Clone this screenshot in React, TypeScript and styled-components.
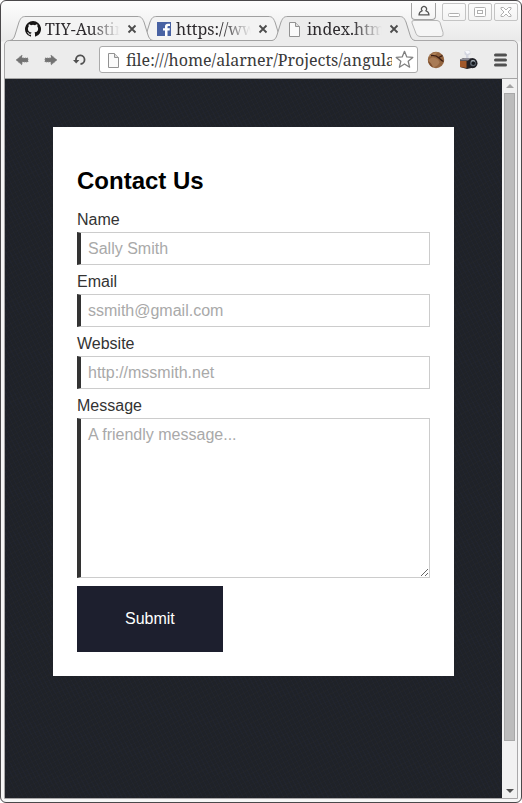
import React from "react";
import styled, { createGlobalStyle, css } from "styled-components";

const GlobalStyle = createGlobalStyle`
  *, *::before, *::after { box-sizing: border-box; }
  body { margin: 0; background: #fff; font-family: "Liberation Sans", Arial, sans-serif; }
  button { margin: 0; padding: 0; border: 0; background: none; font: inherit; color: inherit; }
  svg { display: block; }
`;

const uiSerif = css`
  font-family: "Droid Serif", "Noto Serif", "DejaVu Serif Condensed", "Liberation Serif", serif;
`;

const WindowFrame = styled.div`
  position: relative;
  display: flex;
  flex-direction: column;
  height: 100vh;
  min-height: 720px;
  padding: 1px 3px 3px;
  border: 1px solid #4a484a;
  border-radius: 6px;
  background: linear-gradient(#fdfdfd, #e9e9e9 40px, #f6f6f6 41px);
`;

const TabStrip = styled.div`
  display: flex;
  flex: none;
  height: 38px;
  align-items: flex-end;
  padding-left: 6px;
`;

const TabItem = styled.div<{ $order: number }>`
  position: relative;
  z-index: ${(p) => p.$order};
  display: flex;
  flex: 0 0 143px;
  min-width: 0;
  align-items: center;
  height: 25px;
  margin: 0 -12px -1px 0;
  padding: 0 16px 0 15px;
`;

const TabShape = styled.svg`
  position: absolute;
  inset: 0;
  z-index: -1;
  width: 143px;
  height: 25px;
`;

const TabTitle = styled.button`
  ${uiSerif}
  display: flex;
  flex: 1;
  min-width: 0;
  align-items: center;
  gap: 4px;
  color: #2d2a2d;
  font-size: 16px;
  line-height: 22px;
  text-align: left;
  white-space: nowrap;
`;

const FadingText = styled.span`
  flex: 1;
  overflow: hidden;
  mask-image: linear-gradient(to right, #000 60%, transparent);
`;

const CloseButton = styled.button`
  margin-left: 7px;
`;

const NewTabButton = styled.button`
  margin: 0 0 3px 8px;
`;

const WindowControls = styled.div`
  position: absolute;
  top: 2px;
  right: 3px;
  display: flex;
  gap: 2px;
  align-items: flex-start;
`;

const ControlButton = styled.button`
  display: grid;
  place-items: center;
  width: 24px;
  height: 18px;
  border: 1px solid #c4c4c4;
  border-radius: 2px;
`;

const ProfileButton = styled(ControlButton)`
  width: 25px;
  height: 17px;
  margin-right: 4px;
  border-color: #a3a3a3;
  border-top: 0;
  border-radius: 0 0 4px 4px;
`;

const Client = styled.div`
  display: flex;
  flex: 1;
  flex-direction: column;
  min-height: 0;
  border: 1px solid #a9a8a9;
  border-radius: 5px 5px 0 0;
  background: #ececec;
`;

const Toolbar = styled.div`
  display: flex;
  flex: none;
  align-items: center;
  height: 38px;
  padding: 0 9px;
  border-bottom: 1px solid #a4a4a4;
`;

const NavButtons = styled.div`
  display: flex;
  gap: 13px;
  margin-right: 11px;
`;

const AddressBar = styled.div`
  display: flex;
  flex: 1;
  min-width: 0;
  align-items: center;
  height: 27px;
  padding: 0 3px 0 6px;
  border: 1px solid #aaa;
  border-radius: 3px;
  background: #fff;
`;

const AddressInput = styled.input`
  ${uiSerif}
  flex: 1;
  width: 0;
  min-width: 0;
  margin: 0 3px 0 4px;
  padding: 0;
  border: 0;
  outline: 0;
  background: none;
  color: #3a3a3a;
  font-size: 16px;
  line-height: 22px;
`;

const ExtensionButtons = styled.div`
  display: flex;
  align-items: center;
  gap: 15px;
  margin-left: 9px;
`;

const Viewport = styled.div`
  display: flex;
  flex: 1;
  min-height: 0;
`;

const Page = styled.main`
  flex: 1;
  min-width: 0;
  overflow: hidden;
  padding: 48px;
  background:
    repeating-linear-gradient(63deg, rgba(35, 40, 58, 0.3) 0 1px, transparent 1px 4px),
    repeating-linear-gradient(-27deg, rgba(40, 40, 40, 0.3) 0 1px, transparent 1px 5px),
    #1f2228;
`;

const ContactForm = styled.form`
  display: flex;
  flex-direction: column;
  align-items: stretch;
  padding: 40px 24px 24px;
  background: #fff;
`;

const Heading = styled.h2`
  margin: 0 0 16px;
  color: #000;
  font-size: 24px;
  line-height: 28px;
`;

const Field = styled.div`
  display: flex;
  flex-direction: column;
  gap: 3px;
  margin-bottom: 8px;
`;

const Label = styled.label`
  color: #333;
  font-size: 16px;
  line-height: 18px;
`;

const control = css`
  display: block;
  width: 100%;
  margin: 0;
  padding: 7px;
  border: 1px solid #ccc;
  border-left: 4px solid #333;
  border-radius: 0;
  outline: 0;
  background: #fff;
  color: #333;
  font: 16px "Liberation Sans", Arial, sans-serif;
  &::placeholder { color: #a9a9a9; opacity: 1; }
`;

const TextInput = styled.input`
  ${control}
  height: 33px;
`;

const MessageArea = styled.textarea`
  ${control}
  height: 160px;
  resize: both;
`;

const SubmitButton = styled.button`
  align-self: flex-start;
  padding: 24px 48px;
  background: #1d1f2e;
  color: #fff;
  font-size: 16px;
  line-height: 18px;
`;

const Scrollbar = styled.div`
  display: flex;
  flex: none;
  flex-direction: column;
  align-items: center;
  width: 15px;
  background: #f1f1f1;
`;

const ScrollArrow = styled.button`
  display: grid;
  flex: none;
  place-items: center;
  width: 15px;
  height: 14px;
`;

const ScrollTrack = styled.div`
  flex: 1;
  padding-bottom: 43px;
`;

const ScrollThumb = styled.div`
  width: 11px;
  height: 100%;
  border: 1px solid #a8a8a8;
  background: #bcbcbc;
`;

const GitHubIcon = () => (
  <svg width="16" height="16" viewBox="0 0 16 16" fill="#171515">
    <path d="M8 0a8 8 0 0 0-2.53 15.59c.4.07.55-.17.55-.38v-1.49c-2.23.48-2.7-.94-2.7-.94-.36-.93-.89-1.17-.89-1.17-.73-.5.05-.49.05-.49.81.06 1.23.83 1.23.83.72 1.23 1.88.87 2.34.67.07-.52.28-.88.5-1.08-1.77-.2-3.64-.89-3.64-3.95 0-.87.31-1.59.82-2.15-.08-.2-.36-1.01.08-2.12 0 0 .67-.21 2.2.82a7.6 7.6 0 0 1 4 0c1.53-1.04 2.2-.82 2.2-.82.44 1.11.16 1.92.08 2.12.51.56.82 1.28.82 2.15 0 3.07-1.87 3.75-3.65 3.95.29.25.54.73.54 1.48v2.2c0 .21.15.46.55.38A8 8 0 0 0 8 0Z" />
  </svg>
);

const FacebookIcon = () => (
  <svg width="16" height="16" viewBox="0 0 16 16">
    <rect x="1" y="1" width="14" height="14" fill="#4862a3" />
    <path fill="#fff" d="M9 15V9.5H7V7.2h2V5.5C9 3.7 10.1 2.7 11.8 2.7H14v2.2h-1.4c-.8 0-1.1.4-1.1 1.1v1.2h2.4l-.3 2.3h-2.1V15Z" />
  </svg>
);

const FileIcon = () => (
  <svg width="16" height="16" viewBox="0 0 16 16" fill="#fafafa" stroke="#929292">
    <path d="M2.5 1.5h6l4 4v10h-10Z" />
    <path d="M8.5 1.5v4h4" fill="#ddd" />
  </svg>
);

const ArrowIcon = ({ forward = false }: { forward?: boolean }) => (
  <svg width="16" height="16" viewBox="0 0 16 16">
    <path
      d={forward ? "M14 8 8 3v3H2v4h6v3Z" : "M2 8l6-5v3h6v4H8v3Z"}
      fill="#727272"
      stroke="#8b8b8b"
      strokeDasharray="1 1"
    />
  </svg>
);

const ReloadIcon = () => (
  <svg width="16" height="16" viewBox="0 0 16 16">
    <path d="M4 9V7a4.3 4.3 0 1 1 4.5 5" fill="none" stroke="#505050" strokeWidth="1.8" />
    <path d="M1 8h6.4L4.2 11.6Z" fill="#505050" />
  </svg>
);

const StarIcon = () => (
  <svg width="19" height="19" viewBox="0 0 19 19">
    <path d="m9.5 1.3 2.3 5.6 6 .5-4.6 3.9 1.4 5.9-5.1-3.2-5.1 3.2 1.4-5.9-4.6-3.9 6-.5Z" fill="#fff" stroke="#808080" strokeWidth="1.3" strokeLinejoin="round" />
  </svg>
);

const BallIcon = () => (
  <svg width="18" height="18" viewBox="0 0 18 18">
    <circle cx="9" cy="9" r="8.2" fill="#93643f" />
    <path d="M1.5 6.5Q5 1 11 1.3q-2 1.500-3 3Q4 4.500 1.500 6.500" fill="#ad8056" />
    <path d="M1.500 10q1.500-4 5-3.500 5 1 6 5-2 4-5.500 4.500Q2.500 15 1.500 10" fill="#a97b55" />
    <path d="M1 10q3 1 5 6.600Q2.500 15 1 10" fill="#7d4d2c" />
    <path d="M4 4.500q5-.5 8 2.500t4.500 3.500M11.500 6.500q2.500-1 4-2" fill="none" stroke="#3b1d13" strokeWidth="1.3" />
  </svg>
);

const CameraIcon = () => (
  <svg width="18" height="20" viewBox="0 0 18 20">
    <path d="m4.5 1 5.5-.5.5 3.500-2 1.200v3H6v-3l-1.500-1Z" fill="#d3d5df" />
    <path d="m5 1 4.500 0 .4 2L7 4Z" fill="#f7f8fc" />
    <path d="m0 9.500 4-1.500h8l4 2V17l-9 2-7-2Z" fill="#262222" />
    <path d="m0 9.500 4-1.500h8l1 2.500H0Z" fill="#8b8a94" />
    <path d="M0 11h6.500v7L0 17Z" fill="#a1592b" />
    <circle cx="12.500" cy="13.200" r="5" fill="#202127" />
    <circle cx="13" cy="13.200" r="3" fill="#59616b" />
    <circle cx="13.400" cy="13.200" r="1.700" fill="#13171c" />
    <path d="M11 11.200q2-1.400 4 0" fill="none" stroke="#b4bcc3" />
  </svg>
);

const MenuIcon = () => (
  <svg width="15" height="16" viewBox="0 0 15 16" fill="none" stroke="#505050" strokeWidth="3" strokeLinecap="round">
    <path d="M2.500 3h10M2.500 8h10M2.500 13h10" />
  </svg>
);

const CloseIcon = () => (
  <svg width="10" height="10" viewBox="0 0 10 10">
    <path d="m1.500 1.500 7 7m0-7-7 7" stroke="#4c4c4c" strokeWidth="1.800" />
  </svg>
);

interface TabProps {
  title: string;
  icon: React.ReactNode;
  order: number;
  active?: boolean;
}

const Tab = ({ title, icon, order, active = false }: TabProps) => (
  <TabItem $order={order}>
    <TabShape viewBox="0 0 143 25" aria-hidden="true">
      <path
        d="M0 24.5C3 24 4 22 5 19L9 6C11 1.5 12 .5 16 .5H127C131 .5 132 1.5 134 6L138 19C139 22 140 24 143 24.5V25H0Z"
        fill={active ? "#ececec" : "#f3f3f3"}
      />
      <path
        d={`M0 24.5C3 24 4 22 5 19L9 6C11 1.5 12 .5 16 .5H127C131 .5 132 1.5 134 6L138 19C139 22 140 24 143 24.5${active ? "" : "H0"}`}
        fill="none"
        stroke="#a0a0a0"
      />
    </TabShape>
    <TabTitle type="button">
      {icon}
      <FadingText>{title}</FadingText>
    </TabTitle>
    <CloseButton type="button" aria-label={`Close ${title}`}>
      <CloseIcon />
    </CloseButton>
  </TabItem>
);

export default function App() {
  return (
    <>
      <GlobalStyle />
      <WindowFrame>
        <TabStrip>
          <Tab title="TIY-Austin" icon={<GitHubIcon />} order={2} />
          <Tab title="https://www" icon={<FacebookIcon />} order={1} />
          <Tab title="index.html" icon={<FileIcon />} order={3} active />
          <NewTabButton type="button" aria-label="New tab">
            <svg width="33" height="17" viewBox="0 0 33 17">
              <path d="M3 .5h23q2 0 3 2l3 10q1 4-2 4H9q-3 0-4-3L1 3Q0 .5 3 .5Z" fill="#f5f5f5" stroke="#b5b5b5" />
            </svg>
          </NewTabButton>
        </TabStrip>
        <WindowControls>
          <ProfileButton type="button" aria-label="Profile">
            <svg width="12" height="12" viewBox="0 0 12 12" fill="none" stroke="#555" strokeWidth="1.2">
              <path d="M4.200 5.800a2.500 2.500 0 1 1 3.600 0C9.600 6.500 11 7.500 11 9.900H1C1 7.500 2.400 6.500 4.200 5.800Z" />
            </svg>
          </ProfileButton>
          <ControlButton type="button" aria-label="Minimize">
            <svg width="12" height="12" viewBox="0 0 12 12" fill="#fff" stroke="#b0b0b0">
              <rect x=".5" y="7.5" width="11" height="3" rx="1" />
            </svg>
          </ControlButton>
          <ControlButton type="button" aria-label="Maximize">
            <svg width="12" height="12" viewBox="0 0 12 12" fill="#fff" stroke="#b0b0b0">
              <rect x=".5" y="1.5" width="11" height="9" rx="1" />
              <rect x="3.5" y="4.5" width="5" height="3" />
            </svg>
          </ControlButton>
          <ControlButton type="button" aria-label="Close window">
            <svg width="12" height="12" viewBox="0 0 12 12" fill="#fff" stroke="#b0b0b0">
              <path d="M1 1.5h2.5L6 4l2.5-2.5H11V3L8 6l3 3v1.5H8.5L6 8l-2.5 2.5H1V9l3-3-3-3Z" />
            </svg>
          </ControlButton>
        </WindowControls>
        <Client>
          <Toolbar>
            <NavButtons>
              <button type="button" aria-label="Back"><ArrowIcon /></button>
              <button type="button" aria-label="Forward"><ArrowIcon forward /></button>
              <button type="button" aria-label="Reload"><ReloadIcon /></button>
            </NavButtons>
            <AddressBar>
              <FileIcon />
              <AddressInput aria-label="Address" defaultValue="file:///home/alarner/Projects/angular" />
              <button type="button" aria-label="Bookmark"><StarIcon /></button>
            </AddressBar>
            <ExtensionButtons>
              <button type="button" aria-label="Ball extension"><BallIcon /></button>
              <button type="button" aria-label="Camera extension"><CameraIcon /></button>
              <button type="button" aria-label="Menu"><MenuIcon /></button>
            </ExtensionButtons>
          </Toolbar>
          <Viewport>
            <Page>
              <ContactForm onSubmit={(e) => e.preventDefault()}>
                <Heading>Contact Us</Heading>
                <Field>
                  <Label htmlFor="name">Name</Label>
                  <TextInput id="name" type="text" placeholder="Sally Smith" />
                </Field>
                <Field>
                  <Label htmlFor="email">Email</Label>
                  <TextInput id="email" type="email" placeholder="ssmith@gmail.com" />
                </Field>
                <Field>
                  <Label htmlFor="website">Website</Label>
                  <TextInput id="website" type="url" placeholder="http://mssmith.net" />
                </Field>
                <Field>
                  <Label htmlFor="message">Message</Label>
                  <MessageArea id="message" placeholder="A friendly message..." />
                </Field>
                <SubmitButton type="submit">Submit</SubmitButton>
              </ContactForm>
            </Page>
            <Scrollbar>
              <ScrollArrow type="button" aria-label="Scroll up">
                <svg width="8" height="4" viewBox="0 0 8 4"><path d="M0 4 4 0l4 4Z" fill="#a3a3a3" /></svg>
              </ScrollArrow>
              <ScrollTrack><ScrollThumb /></ScrollTrack>
              <ScrollArrow type="button" aria-label="Scroll down">
                <svg width="8" height="4" viewBox="0 0 8 4"><path d="M0 0h8L4 4Z" fill="#505050" /></svg>
              </ScrollArrow>
            </Scrollbar>
          </Viewport>
        </Client>
      </WindowFrame>
    </>
  );
}
